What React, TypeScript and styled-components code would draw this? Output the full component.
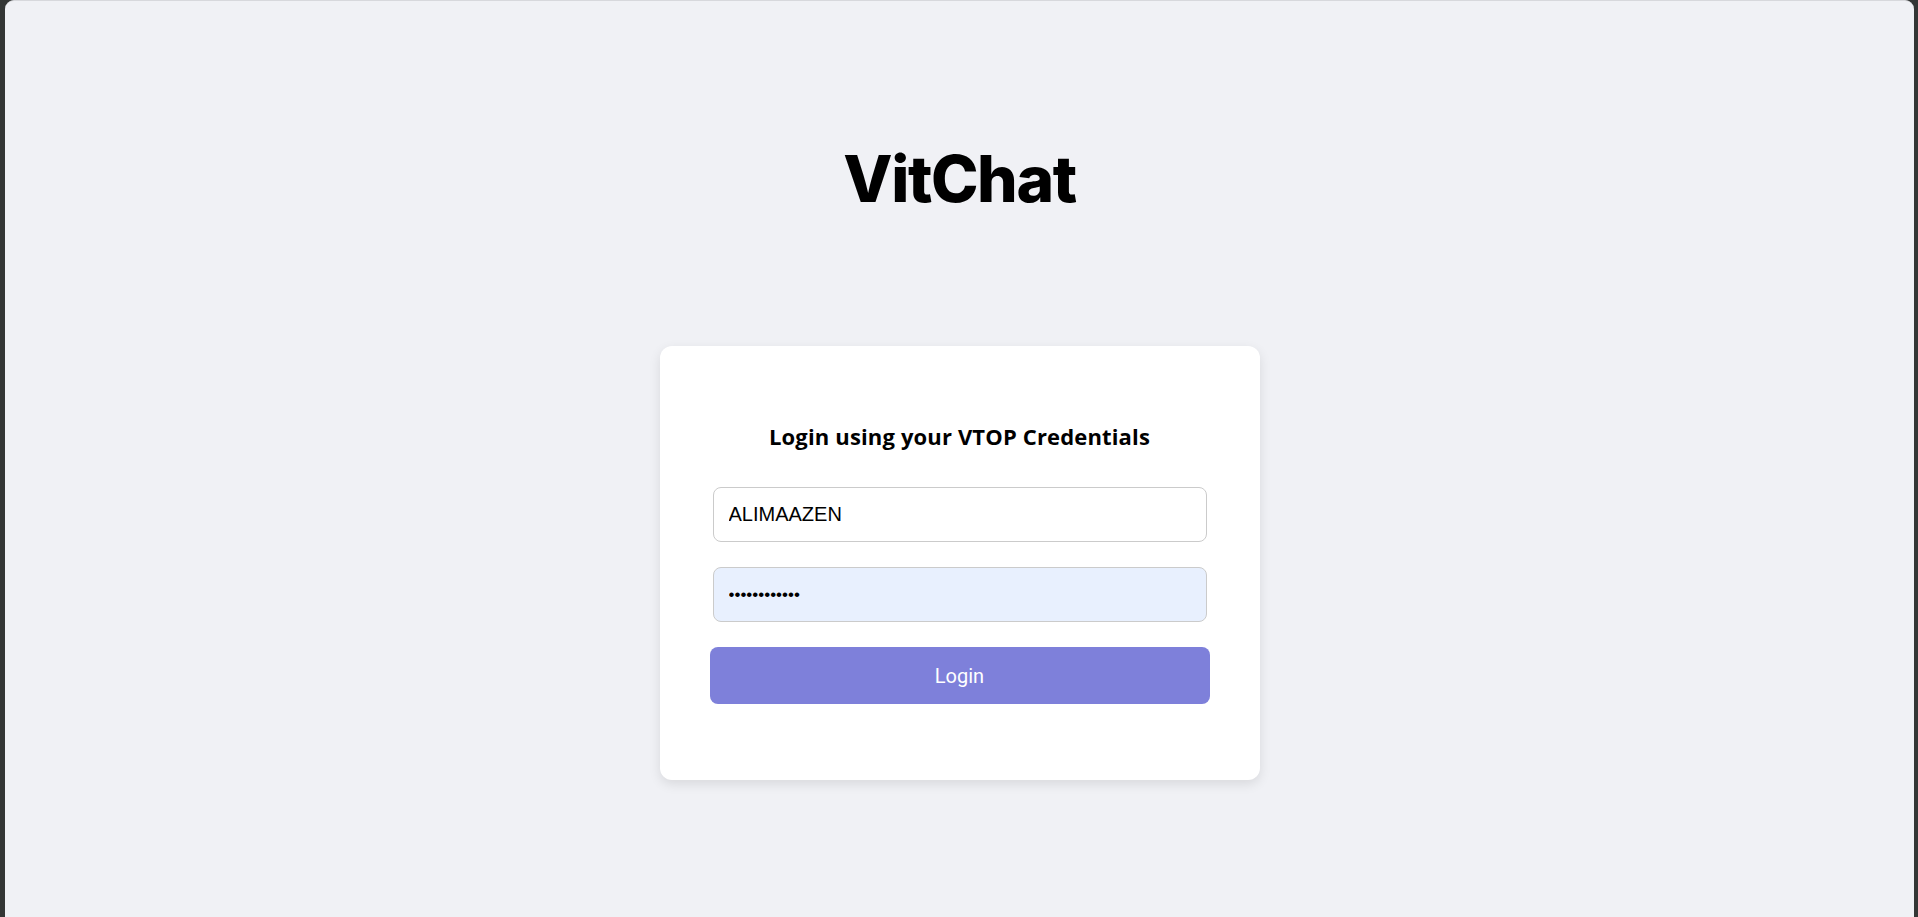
import React from "react";
import styled, { createGlobalStyle } from "styled-components";

const Global = createGlobalStyle`
  html, body { margin: 0; padding: 0; background: #333635; }
  body { overflow: hidden; }
  * { box-sizing: border-box; }
`;

const Frame = styled.div`
  height: 917px;
  margin: 0 4px 0 5px;
  border-top: 1px solid #d7d8dc;
  border-radius: 9px 9px 0 0;
  background: #f0f1f5;
  display: flex;
  flex-direction: column;
  align-items: center;
  padding-top: 139px;
`;

const Title = styled.h1`
  margin: 0;
  font-family: Inter, "Liberation Sans", sans-serif;
  font-weight: 800;
  font-size: 64px;
  line-height: 77px;
  color: #000;
  letter-spacing: -1.4px;
`;

const Card = styled.div`
  margin-top: 129px;
  width: 600px;
  background: #fff;
  border-radius: 12px;
  box-shadow: 0 4px 12px rgba(0, 0, 0, 0.1);
  padding: 75px 50px 76px;
  display: flex;
  flex-direction: column;
`;

const Heading = styled.h3`
  margin: 0 0 36px;
  text-align: center;
  font-family: "Open Sans", "Noto Sans", sans-serif;
  font-weight: 700;
  font-size: 22px;
  line-height: 30px;
  letter-spacing: 0.15px;
  color: #000;
`;

const Field = styled.input<{ $secret?: boolean }>`
  display: block;
  height: 55px;
  margin: 0 3px 25px;
  padding: 0 15px;
  border: 1px solid #cbcbcb;
  border-radius: 8px;
  background: ${(p) => (p.$secret ? "#e8f0fe" : "#fff")};
  font-family: "Liberation Sans", Arial, sans-serif;
  font-size: ${(p) => (p.$secret ? "17px" : "20px")};
  color: #000;
  outline: none;
`;

const Button = styled.button`
  height: 57px;
  border: none;
  border-radius: 8px;
  background: #7e80da;
  color: #fff;
  font-family: Roboto, "Liberation Sans", sans-serif;
  font-size: 20px;
  cursor: pointer;
`;

export default function App() {
  return (
    <>
      <Global />
      <Frame>
        <Title>VitChat</Title>
        <Card>
          <Heading>Login using your VTOP Credentials</Heading>
          <Field type="text" defaultValue="ALIMAAZEN" />
          <Field type="password" defaultValue="************" $secret />
          <Button>Login</Button>
        </Card>
      </Frame>
    </>
  );
}
